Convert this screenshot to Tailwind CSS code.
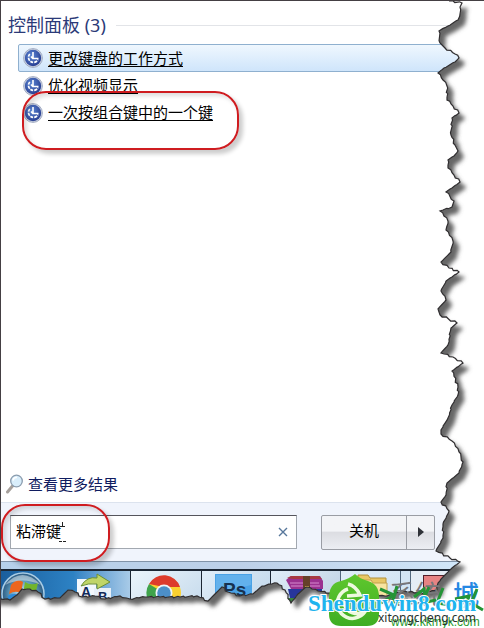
<!DOCTYPE html>
<html lang="zh-CN">
<head>
<meta charset="utf-8">
<meta name="viewport" content="width=device-width, initial-scale=1">
<title>控制面板</title>
<script src="https://cdn.jsdelivr.net/npm/@tailwindcss/browser@4"></script>
</head>
<body class="bg-white font-['Noto_Sans','Noto_Sans_CJK_SC',sans-serif] text-[15px] text-black">
<svg class="absolute size-0" aria-hidden="true">
  <defs>
    <radialGradient id="orb" cx=".4" cy=".35" r=".7"><stop offset="0" stop-color="#5b86d4"/><stop offset="1" stop-color="#263b8e"/></radialGradient>
    <symbol id="ease" viewBox="0 0 20 20">
      <circle cx="10" cy="10" r="9.4" fill="#d3d9e6" stroke="#8f9bb5" stroke-width=".8"/>
      <circle cx="10" cy="10" r="8.200" fill="url(#orb)"/>
      <path d="M6.800 6A5 5 0 1 0 15 11.500" fill="none" stroke="#fff" stroke-width="1.700" stroke-dasharray="3 1"/>
      <path d="M10 4v6.500h5.500M8 8.500l2 2.200" fill="none" stroke="#fff" stroke-width="1.600"/>
    </symbol>
  </defs>
</svg>
<main class="relative flex min-h-screen flex-col overflow-hidden border-t border-l border-[#443f43]">
  <section class="flex grow flex-col pr-6">
    <div class="flex items-center gap-2.5 pt-3 pl-[7px]">
      <h1 class="text-[18px] leading-6 text-[#2b3a78]">控制面板 (3)</h1>
      <div class="h-px grow bg-[#e2e4e8]"></div>
    </div>
    <ul class="mt-[7px] pl-[17px]">
      <li class="flex h-7 items-center gap-[5px] rounded-xs border border-[#8fb0cf] bg-linear-to-b from-[#eff7fe] to-[#cfe5fb] pl-1">
        <svg class="size-5"><use href="#ease"/></svg><a href="#" class="underline underline-offset-2">更改键盘的工作方式</a></li>
      <li class="flex h-[27px] items-center gap-[5px] pl-[5px]">
        <svg class="size-5"><use href="#ease"/></svg><a href="#" class="underline underline-offset-2">优化视频显示</a></li>
      <li class="flex h-[27px] items-center gap-[5px] pl-[5px]">
        <svg class="size-5"><use href="#ease"/></svg><a href="#" class="underline underline-offset-2">一次按组合键中的一个键</a></li>
    </ul>
    <a href="#" class="mt-auto mb-[6px] flex items-center gap-[3px] pl-1 leading-6 text-[#101c60]">
      <svg class="size-5" viewBox="0 0 20 20"><path d="M7.5 12 2.5 18" stroke="#a6a09c" stroke-width="3" stroke-linecap="round"/><circle cx="11.5" cy="7" r="5.8" fill="#d9eefb" stroke="#8a9cae" stroke-width="1.3"/><path d="M8 6.5a3.6 3.6 0 0 1 4-3" fill="none" stroke="#fff" stroke-width="1.6"/></svg>
      查看更多结果</a>
  </section>
  <form class="flex h-[59px] items-center border-t border-[#dce3ee] bg-[#f0f4fc] pr-[49px] pl-[9px]">
    <div class="relative flex grow">
      <input aria-label="搜索" value="粘滞键" class="h-[34px] w-full min-w-0 border border-[#a2a8b0] border-t-[#55555c] bg-white px-[5px] pb-1 outline-none">
      <button type="button" aria-label="清除" class="absolute top-3 right-[9px]"><svg class="size-[10px]" viewBox="0 0 10 10"><path d="m1 1 8 8M9 1 1 9" stroke="#57779b" stroke-width="1.4"/></svg></button>
    </div>
    <div class="ml-6 flex h-[35px] shrink-0 rounded-xs border border-[#9a9da4] bg-linear-to-b from-[#f3f4f7] from-45% via-[#dcdde2] via-50% to-[#eceef3]">
      <button type="button" class="w-[84px] pb-1">关机</button>
      <button type="button" aria-label="更多关机选项" class="flex w-7 items-center justify-center border-l border-[#9a9da4]"><svg class="h-[10px] w-[6px]" viewBox="0 0 6 10"><path d="M0 0 6 5 0 10z" fill="#2f3238"/></svg></button>
    </div>
  </form>
  <div class="h-2 border-t border-[#8193a8] bg-linear-to-r from-[#b6d0ea] via-[#bdd0e8] to-[#d3e9fb]"></div>
  <nav aria-label="任务栏" class="flex h-[59px] border-t-2 border-[#1b2634] bg-linear-to-r from-[#1a5e9d] via-[#2d82c4] via-15% to-[#c8dff1] to-30%">
    <a href="#" aria-label="开始" class="w-[70px]"><svg class="h-[46px] w-[46px]" viewBox="0 0 46 46"><defs><radialGradient id="start"><stop offset="0" stop-color="#d9f1ff"/><stop offset=".65" stop-color="#5794b6"/><stop offset="1" stop-color="#2c5980"/></radialGradient></defs><circle cx="22" cy="23" r="21" fill="url(#start)" stroke="#a9cce4" stroke-width="1.5"/><path d="M10 14q6-7 12-3l-2 11q-6-3-12 1z" fill="#ec651d"/><path d="M24 11q6 4 13 1l-3 12q-6 2-12-1z" fill="#72b52d"/><path d="M7 25q6-4 11-1l-2 9H6z" fill="#2d89d8"/><path d="M20 24q6 3 11 1l-2 8H18z" fill="#fbc52b"/><path d="M4 14Q21-6 40 14 21 5 4 14" fill="#fff" opacity=".45"/></svg></a>
    <a href="#" aria-label="语言" class="w-[59px]"><svg class="h-[46px] w-[46px]" viewBox="0 0 46 46"><path d="M6 8h19v28H6z" fill="#f3f8fd"/><path d="M23 17h17v24H23z" fill="#e8f0f9"/><text x="10" y="26" font-family="Liberation Sans" font-weight="700" font-size="14" fill="#122a5a">A</text><text x="27" y="30" font-family="Liberation Sans" font-weight="700" font-size="13" fill="#122a5a">B</text><path d="M10 15q6-10 16-8V3l13 8-13 7v-5q-9-1-16 2z" fill="#c0d568" stroke="#6d8f35"/></svg></a>
    <a href="#" aria-label="Chrome" class="w-[71px] border-l border-[#1b2634] bg-linear-to-br from-[#eaf4fb] to-[#bdd4e8] pl-[15px]"><svg class="h-[38px] w-9" viewBox="0 0 36 38"><circle cx="18" cy="22" r="17" fill="#fbd12f"/><path d="M18 22 3 13a17 17 0 0 0 13 26z" fill="#3fa34b"/><path d="M3 13a17 17 0 0 1 31 3H18z" fill="#dd3b2c"/><circle cx="18" cy="22" r="8.5" fill="#eff5f8"/><circle cx="18" cy="22" r="6.8" fill="#4c8fc8"/></svg></a>
    <a href="#" aria-label="Photoshop" class="w-[70px] border-x border-[#1b2634] bg-linear-to-br from-[#e0eef9] to-[#b8cfe5] pl-[13px]"><svg class="h-[42px] w-[38px]" viewBox="0 0 38 42"><path d="M0 3h37v38H0z" fill="#4aa2e6"/><path d="M1 4h35v10L1 23z" fill="#7abff2" opacity=".5"/><text x="8" y="25" font-family="Liberation Sans" font-weight="700" font-size="19" fill="#17314f">Ps</text></svg></a>
    <a href="#" aria-label="WinRAR" class="w-[69px] bg-linear-to-br from-[#e0edf8] to-[#b4c7dc] pl-[14px]"><svg class="h-[38px] w-10" viewBox="0 0 40 38"><path d="M1 9 6 5h29l3 5v8H6z" fill="#9b3190"/><path d="m2 7 4-2h28l3 3H8z" fill="#a73a42"/><path d="M5 12h29M6 15h29" stroke="#d58bce"/><path d="M3 18h34v9H5z" fill="#27359c"/><path d="M3 27h34v8H5z" fill="#398440"/><path d="M18 5h7v30h-7z" fill="#65402a"/><path d="M20 15h4v9h-4z" fill="#e0b54b"/></svg></a>
    <a href="#" aria-label="文件夹" class="w-[61px] border-x border-[#52687d] bg-linear-to-br from-[#e1eef9] to-[#cbdff0] pl-[16px]"><svg class="h-10 w-8" viewBox="0 0 32 40"><path d="M1 8V4h10l2 3h16v25H1z" fill="#e8c765" stroke="#b3913b"/><path d="M5 14V9h9l2 3h14v18H5z" fill="#f7e4a0" stroke="#c0a04c"/></svg></a>
    <div class="w-[10px] border-r border-[#52687d] bg-[#d3e5f4]"></div>
    <a href="#" aria-label="应用" class="grow bg-[#e5edf5] pt-1 pl-3"><svg class="size-9" viewBox="0 0 36 36"><path d="M0 0h36v36H0z" fill="#e68383" stroke="#53202a" stroke-width="2"/></svg></a>
  </nav>

  <div class="pointer-events-none absolute top-[90px] left-[21px] h-[59px] w-[217px] rounded-[24px] border-2 border-[#cf1c20] shadow-[4px_4px_4px_#0003,inset_3px_3px_4px_#0002]"></div>
  <div class="pointer-events-none absolute bottom-[66px] left-0 h-[58px] w-[109px] rounded-[24px] border-2 border-[#cf1c20] shadow-[4px_4px_4px_#0003,inset_3px_3px_4px_#0002]"></div>
  <svg class="pointer-events-none absolute bottom-[84px] left-[57px] h-6 w-2" viewBox="0 0 8 24" aria-hidden="true"><path d="M4.500 2v5M2 6.500h5M1 21.500h3m1 0h3" stroke="#222"/></svg>

  <svg class="pointer-events-none absolute inset-0 size-full" viewBox="1 1 483 627" preserveAspectRatio="none" aria-hidden="true">
    <defs><clipPath id="outside"><path id="outer" clip-rule="evenodd"/></clipPath><filter id="soft"><feGaussianBlur stdDeviation="1.900"/></filter></defs>
    <g clip-path="url(#outside)"><path d="M0 0h490v630H0z" fill="#fff"/><path id="shade" transform="translate(6 6)" fill="#666" filter="url(#soft)"/></g>
    <path id="tear" fill="none" stroke="#302e30" stroke-width="1.200"/>
  </svg>

  <svg class="pointer-events-none absolute right-0 bottom-0 h-[58px] w-[184px]" viewBox="300 570 184 58">
    <defs><linearGradient id="leaf" x2="0" y2="1"><stop stop-color="#5fc72e"/><stop offset="1" stop-color="#3eae23"/></linearGradient></defs>
    <path d="M341 581q8-2 14-7 5 5 13 7 11 3 11 16v17q0 12-12 12h-26q-12 0-12-12v-16q0-15 12-17" fill="url(#leaf)"/>
    <path d="M366 597a15 15 0 1 1-18-8M344 602a13 13 0 0 0 22 8M348 584q8 2 12 11l-13 1M368 607l-2-10-9 7" fill="none" stroke="#eef9df" stroke-width="3.500"/>
    <g font-family="Noto Sans CJK SC" font-size="26"><text x="389" y="604" fill="#77777b">系统</text><text x="453" y="604" font-weight="500" fill="#2588e3">城</text></g>
    <path d="m380 589 14 6-13 8M397 586l-5 18 12-4M414 597l10-8 2 15M429 587l-7 16 14-3M443 588l-6 15 14 2M455 599l14-3-4 12M477 589l-6 14 12 7" fill="none" stroke="#249436" stroke-width="3"/>
    <text x="391" y="626" font-family="Liberation Sans" font-size="12" fill="#299b2d">www.kkmyk.com</text>
    <text x="378" y="622" font-family="Noto Sans" font-size="12" fill="#28312c">xitongcheng.com</text>
    <text x="308" y="611" font-family="Liberation Serif" font-weight="700" font-size="23" fill="#1fb4ee" stroke="#fff" stroke-width="2" paint-order="stroke">Shenduwin8.com</text>
  </svg>
</main>
<script>
  // Torn-paper outline, clockwise from the top-right corner.
  const points = [449,1,462,3,460,7,460,14,458,20,448,26,439,31,440,43,445,48,455,54,459,58,455,62,444,68,438,73,443,80,447,86,447,100,453,106,459,113,452,118,451,135,455,145,458,151,454,156,448,160,448,168,454,175,460,182,452,188,446,192,454,201,452,207,440,211,448,221,446,230,453,241,451,252,441,262,449,268,459,272,452,277,446,281,441,291,446,300,438,309,440,315,457,323,451,328,448,345,441,353,453,357,463,363,452,371,458,387,458,395,452,405,448,418,441,430,441,434,452,441,459,452,463,462,459,473,447,483,446,495,441,502,449,511,443,524,443,538,436,551,450,558,460,562,452,568,443,577,438,583,437,590,420,594,405,591,385,596,365,592,345,596,330,593,318,591,306,587,298,594,291,603,285,590,277,583,262,586,253,594,240,596,228,592,222,587,214,595,208,601,197,596,180,597,160,597,145,597,130,599,120,596,105,599,95,596,82,597,75,592,68,590,60,598,45,599,38,592,30,589,22,589,17,595,10,600,0,599];
  const jitter = [0, 1, -1, 1, 0, -1, 1];
  let d = '', n = 0;
  for (let i = 0; i < points.length - 2; i += 2) {
    const [x, y, u, v] = points.slice(i, i + 4);
    const steps = Math.max(1, Math.round(Math.hypot(u - x, v - y) / 3));
    for (let s = 0; s < steps; s++, n++) {
      const j = s ? jitter[n % 7] * 0.7 : 0;
      d += (d ? 'L' : 'M') + (x + (u - x) * s / steps + j) + ' ' + (y + (v - y) * s / steps - j);
    }
  }
  d += 'L0 599';
  const closed = d + 'L-20 599L-20 -20L449 -20Z';
  document.getElementById('tear').setAttribute('d', d);
  document.getElementById('shade').setAttribute('d', closed);
  document.getElementById('outer').setAttribute('d', closed + 'M-30 -30H500V650H-30Z');
</script>
</body>
</html>
